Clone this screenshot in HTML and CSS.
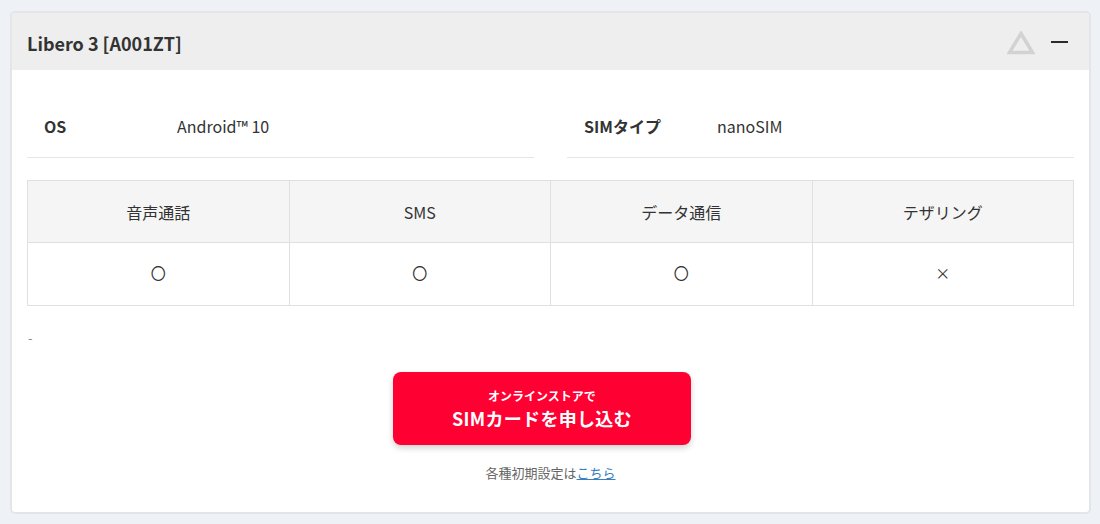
FILE: index.html
```html
<!DOCTYPE html>
<html lang="ja">
<head>
<meta charset="utf-8">
<link rel="stylesheet" href="styles.css">
</head>
<body>
<div class="card">
  <div class="card-head">
    <h2 class="card-title">Libero 3 [A001ZT]</h2>
    <div class="head-icons">
      <svg class="tri" width="28" height="24" viewBox="0 0 28 24"><path d="M14 2.5 L25.5 21.5 L2.5 21.5 Z" fill="none" stroke="#d2d2d2" stroke-width="3.5" stroke-linejoin="miter"/></svg>
      <span class="minus"></span>
    </div>
  </div>
  <div class="card-body">
    <div class="specs">
      <div class="spec"><span class="spec-label">OS</span><span class="spec-value">Android™ 10</span></div>
      <div class="spec"><span class="spec-label">SIMタイプ</span><span class="spec-value">nanoSIM</span></div>
    </div>
    <table class="features">
      <thead>
        <tr><th>音声通話</th><th>SMS</th><th>データ通信</th><th>テザリング</th></tr>
      </thead>
      <tbody>
        <tr><td>〇</td><td>〇</td><td>〇</td><td>×</td></tr>
      </tbody>
    </table>
    <p class="note">-</p>
    <div class="cta-wrap">
      <a class="cta" href="#"><span class="cta-sub">オンラインストアで</span><span class="cta-main">SIMカードを申し込む</span></a>
    </div>
    <p class="setup">各種初期設定は<a href="#">こちら</a></p>
  </div>
</div>
</body>
</html>
```
FILE: styles.css
```css
* { box-sizing: border-box; }
html, body { margin: 0; padding: 0; }
body {
  background: #eef2f6;
  font-family: "Noto Sans CJK JP", "Noto Sans", sans-serif;
  color: #333;
  padding: 11px 9px 0 10px;
}
.card {
  background: #fff;
  border: 2px solid #e3e5e8;
  border-radius: 5px;
  width: 1081px;
  height: 503px;
  overflow: hidden;
}
.card-head {
  background: #eeeeee;
  height: 57px;
  display: flex;
  align-items: center;
  justify-content: space-between;
  padding: 0 21px 0 15px;
}
.card-title {
  margin: 0;
  font-size: 18px;
  font-weight: 700;
  color: #333;
  line-height: 1;
  padding-top: 2px;
}
.head-icons {
  display: flex;
  align-items: center;
  gap: 16px;
  padding-top: 3px;
}
.tri { display: block; }
.minus {
  display: block;
  width: 17px;
  height: 2px;
  background: #2a2a2a;
  margin-top: -2px;
}
.card-body {
  padding: 0 15px;
}
.specs {
  display: flex;
  gap: 33px;
}
.spec {
  flex: 1;
  display: flex;
  align-items: center;
  height: 88px;
  padding: 46px 0 21px 17px;
  border-bottom: 1px solid #e6e6e6;
  line-height: 20px;
}
.spec-label {
  width: 133px;
  font-weight: 700;
  font-size: 16px;
}
.spec-value {
  font-size: 16px;
}
.features {
  margin-top: 22px;
  width: 100%;
  border-collapse: collapse;
  table-layout: fixed;
  font-size: 16px;
}
.features th, .features td {
  border: 1px solid #e0e0e0;
  text-align: center;
  font-weight: 400;
  color: #333;
}
.features th {
  background: #f5f5f5;
  height: 62px;
}
.features td {
  height: 63px;
  font-size: 15px;
  padding-bottom: 4px;
}
.note {
  margin: 22px 0 0 1px;
  font-size: 13px;
  line-height: 20px;
  color: #888;
}
.cta-wrap {
  display: flex;
  justify-content: center;
  margin-top: 24px;
}
.cta {
  width: 298px;
  height: 73px;
  margin-right: 17px;
  background: #ff0033;
  border-radius: 8px;
  box-shadow: 0 3px 6px rgba(0,0,0,0.18);
  color: #fff;
  text-decoration: none;
  display: flex;
  flex-direction: column;
  align-items: center;
  justify-content: center;
  font-weight: 700;
}
.cta-sub {
  font-size: 12px;
  line-height: 18px;
}
.cta-main {
  font-size: 18px;
  line-height: 26px;
  letter-spacing: 0.3px;
}
.setup {
  margin: 19px 0 0;
  text-align: center;
  font-size: 13px;
  line-height: 18px;
  color: #666;
}
.setup a {
  color: #3a7ec0;
  text-decoration: underline;
}
```
